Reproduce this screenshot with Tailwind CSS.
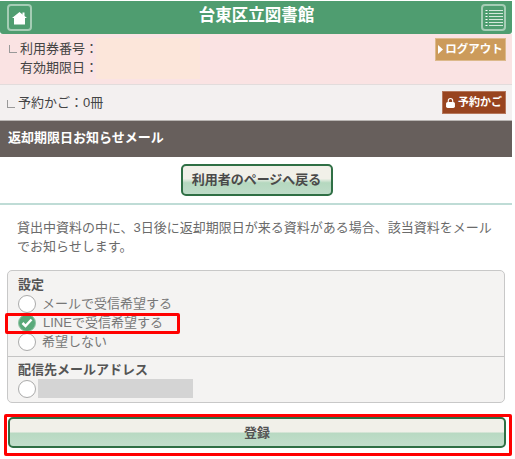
<!DOCTYPE html><html lang="ja">
<head>
  <meta charset="UTF-8">
  <title>台東区立図書館</title>
  <script src="https://cdn.jsdelivr.net/npm/@tailwindcss/browser@4"></script>
</head>
<body class="bg-white font-['Liberation_Sans','Noto_Sans_CJK_JP',sans-serif] overflow-hidden">
  <div class="relative w-[512px] h-[459px]">
    <header class="h-[33px] mt-px bg-[#4f9d70] rounded-b-[3px] flex items-center justify-between pl-[7px] pr-[6px]">
      <a class="w-[25px] h-[27px] border-2 border-[#a5cdb5] rounded-[4px] flex items-center justify-center">
        <svg class="w-[15px] h-[14px]" viewBox="0 0 15 14"><path fill="#fff" d="M7.5 1 L15 7 H13 V13.500 H2 V7 H0 Z"/><rect x="10.500" y="1.500" width="2" height="3.500" fill="#fff"/></svg>
      </a>
      <h1 class="text-white text-[16.5px] font-bold pb-[4px]">台東区立図書館</h1>
      <a class="w-[25px] h-[27px] border-2 border-[#a5cdb5] rounded-[4px] flex items-center justify-center">
        <svg class="w-[18px] h-[18px]" viewBox="0 0 18 18">
          <path stroke="#d5e8dc" stroke-width="1" d="M4 1.500H18M4 4.500H18M4 7.500H18M4 10.500H18M4 13.500H18M4 16.500H18"/>
          <path stroke="#fff" stroke-width="2" stroke-dasharray="1 2" d="M1.500 1V18"/>
        </svg>
      </a>
    </header>
    <section class="h-[51px] bg-[#fae3e3] border-b border-[#e2dcdc] flex justify-between pl-[9px] pr-[6px] pt-[4px] text-[#444]">
      <div class="flex">
        <span class="w-[8px] h-[8px] mt-[7px] mr-[3px] border-l border-b border-[#999]"></span>
        <dl class="text-[13px] leading-[19.5px] pt-[0.5px]">
          <dt>利用券番号：</dt>
          <dt>有効期限日：</dt>
        </dl>
        <div class="w-[104px] h-[41px] bg-[#fce6da] -ml-[2px]"></div>
      </div>
      <a class="h-[23px] w-[71px] bg-[#cc9b5b] text-white text-[11.5px] font-bold whitespace-nowrap flex items-center justify-center border border-[#dcb98b]">
        <svg class="w-[5px] h-[9px] mr-[2px]" viewBox="0 0 5 9"><path fill="#fff" d="M0 0 L5 4.500 L0 9 Z"/></svg>ログアウト
      </a>
    </section>
    <section class="h-[36px] bg-[#f3f0f0] border-b border-[#b9b5b3] flex justify-between items-center pl-[7px] pr-[6px] text-[#444]">
      <div class="flex items-center text-[13px]">
        <span class="w-[8px] h-[8px] mt-[2px] mr-[3px] border-l border-b border-[#999]"></span>
        <p>予約かご：0冊</p>
      </div>
      <a class="h-[23px] w-[64px] bg-[#98441f] text-white text-[11px] font-bold whitespace-nowrap flex items-center justify-center gap-[3px] border border-[#b5765a]">
        <svg class="w-[9px] h-[10px]" viewBox="0 0 8 9"><path fill="none" stroke="#fff" d="M2 4V2.500a2 2 0 0 1 4 0V4"/><rect y="3.500" width="8" height="5.500" rx="1.500" fill="#fff"/></svg>
        予約かご
      </a>
    </section>
    <h2 class="h-[36px] bg-[#675f5c] text-white text-[13px] font-bold flex items-center pl-[8px] pb-[2px]">返却期限日お知らせメール</h2>
    <div class="h-[48px] border-b-2 border-[#bfdcd6] flex justify-center pt-[7px] pl-px">
      <a class="w-[152px] h-[32px] border-2 border-[#2f6f45] rounded-[5px] bg-[linear-gradient(#f1f0e9_45%,#b5d8bf_60%,#bedbc8)] text-[#4a4a4a] text-[13px] font-bold flex items-center justify-center">利用者のページへ戻る</a>
    </div>
    <p class="px-[17px] pt-[13px] text-[13px] leading-[19px] text-[#6b6b6b]">貸出中資料の中に、3日後に返却期限日が来る資料がある場合、該当資料をメールでお知らせします。</p>
    <form class="mx-[7px] mt-[14px]">
      <div class="h-[133px] border border-[#c8c8c8] rounded-[5px] bg-[#f4f3f2] text-[13px]">
        <div class="h-[86px] border-b border-[#c4c4c4] pl-[10px] pt-[4px] text-[#777]">
          <p class="font-bold text-[#555] leading-[19px]">設定</p>
          <label class="flex items-center h-[19px] gap-[6px]"><span class="w-[18px] h-[18px] rounded-full border border-[#aaa] bg-white"></span>メールで受信希望する</label>
          <label class="flex items-center h-[19px] gap-[7px]">
            <span class="w-[18px] h-[18px] rounded-full bg-[#5aa97a] border border-[#8fc4a4] flex items-center justify-center">
              <svg class="w-[12px] h-[10px]" viewBox="0 0 12 10"><path fill="none" stroke="#fff" stroke-width="2.500" d="M1.500 5 L4.500 8 L10.500 1.500"/></svg>
            </span>LINEで受信希望する</label>
          <label class="flex items-center h-[19px] gap-[6px]"><span class="w-[18px] h-[18px] rounded-full border border-[#aaa] bg-white"></span>希望しない</label>
        </div>
        <div class="pl-[10px] pt-[3px]">
          <p class="font-bold text-[#555] leading-[19px]">配信先メールアドレス</p>
          <label class="flex items-center h-[19px] gap-[2px]"><span class="w-[18px] h-[18px] rounded-full border border-[#aaa] bg-white"></span><span class="w-[155px] h-[19px] bg-[#d4d4d4]"></span></label>
        </div>
      </div>
      <button type="button" class="block w-[498px] h-[31px] mt-[14px] ml-px border-2 border-[#2f6f45] rounded-[5px] bg-[linear-gradient(#f1f0e9_48%,#b8d9c2_52%,#c2decb)] text-[#555] text-[13px] font-bold">登録</button>
    </form>
    <!-- red annotation frames -->
    <div class="absolute left-[5px] top-[312px] w-[175px] h-[21px] border-[3px] border-[#f00] rounded-[2px]"></div>
    <div class="absolute left-[4px] top-[413px] w-[508px] h-[42px] border-[3px] border-[#f00] rounded-[2px]"></div>
  </div>
</body>
</html>
